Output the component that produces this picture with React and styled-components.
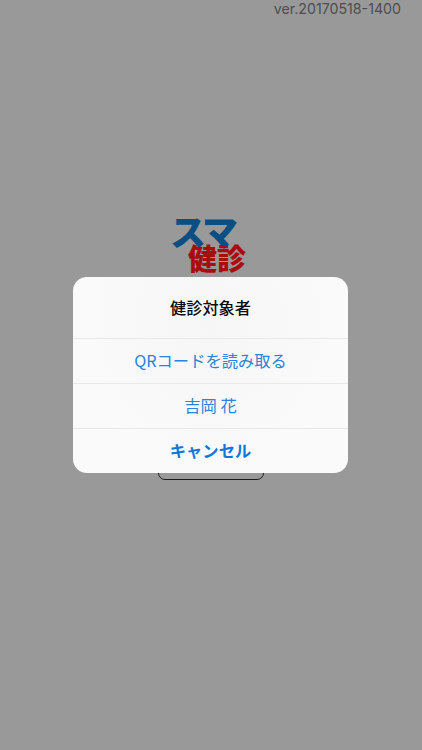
import React from "react";
import styled, { createGlobalStyle } from "styled-components";

const jp = `"Noto Sans CJK JP", "Inter", "Liberation Sans", sans-serif`;

const GlobalStyle = createGlobalStyle`
  html, body {
    margin: 0;
    padding: 0;
    height: 100%;
    background: #999999;
    font-family: ${jp};
  }
  #root {
    height: 100%;
  }
`;

const Screen = styled.div`
  position: relative;
  display: flex;
  flex-direction: column;
  align-items: center;
  width: 422px;
  height: 750px;
  overflow: hidden;
  background: #999999;
`;

const Version = styled.div`
  align-self: flex-end;
  height: 18px;
  padding-right: 21px;
  font-family: "Inter", "Liberation Sans", sans-serif;
  font-size: 14.2px;
  line-height: 18px;
  color: #4d4d4d;
`;

const Logo = styled.div`
  display: flex;
  flex-direction: column;
  width: 74px;
  margin-top: 197px;
  margin-left: -8px;
  font-weight: 900;
`;

const LogoTop = styled.div`
  height: 29px;
  font-size: 36px;
  line-height: 30px;
  letter-spacing: -3px;
  white-space: nowrap;
  color: #0a4f82;
`;

const LogoBottom = styled.div`
  height: 28px;
  margin-left: 18px;
  font-size: 29px;
  line-height: 27px;
  white-space: nowrap;
  color: #a80d0d;
`;

const HiddenButton = styled.div`
  box-sizing: border-box;
  width: 106px;
  height: 44px;
  margin-top: 164px;
  border: 1.5px solid #1c1c1c;
  border-radius: 7px;
`;

const Overlay = styled.div`
  position: absolute;
  inset: 0;
  display: flex;
  align-items: center;
  justify-content: center;
  padding-right: 1px;
`;

const Alert = styled.div`
  width: 275px;
  border-radius: 14px;
  overflow: hidden;
  background: radial-gradient(ellipse at 50% 25%, #f6f6f6 0%, #fafafa 70%);
`;

const Title = styled.div`
  display: flex;
  align-items: center;
  justify-content: center;
  height: 61px;
  padding-bottom: 2px;
  box-sizing: border-box;
  font-size: 16.2px;
  font-weight: 500;
  color: #0a0a0a;
`;

const Action = styled.div`
  display: flex;
  align-items: center;
  justify-content: center;
  height: 45px;
  padding-bottom: 2px;
  box-sizing: border-box;
  border-top: 1px solid #e8e8e8;
  font-size: 16.3px;
  font-weight: ${(p) => (p.$bold ? 700 : 400)};
  color: ${(p) => (p.$bold ? "#0f76db" : "#2a83dc")};
`;

const App = () => {
  return (
    <>
      <GlobalStyle />
      <Screen>
        <Version>ver.20170518-1400</Version>
        <Logo>
          <LogoTop>スマ</LogoTop>
          <LogoBottom>健診</LogoBottom>
        </Logo>
        <HiddenButton />
        <Overlay>
          <Alert>
            <Title>健診対象者</Title>
            <Action>QRコードを読み取る</Action>
            <Action>吉岡 花</Action>
            <Action $bold>キャンセル</Action>
          </Alert>
        </Overlay>
      </Screen>
    </>
  );
};

export default App;
